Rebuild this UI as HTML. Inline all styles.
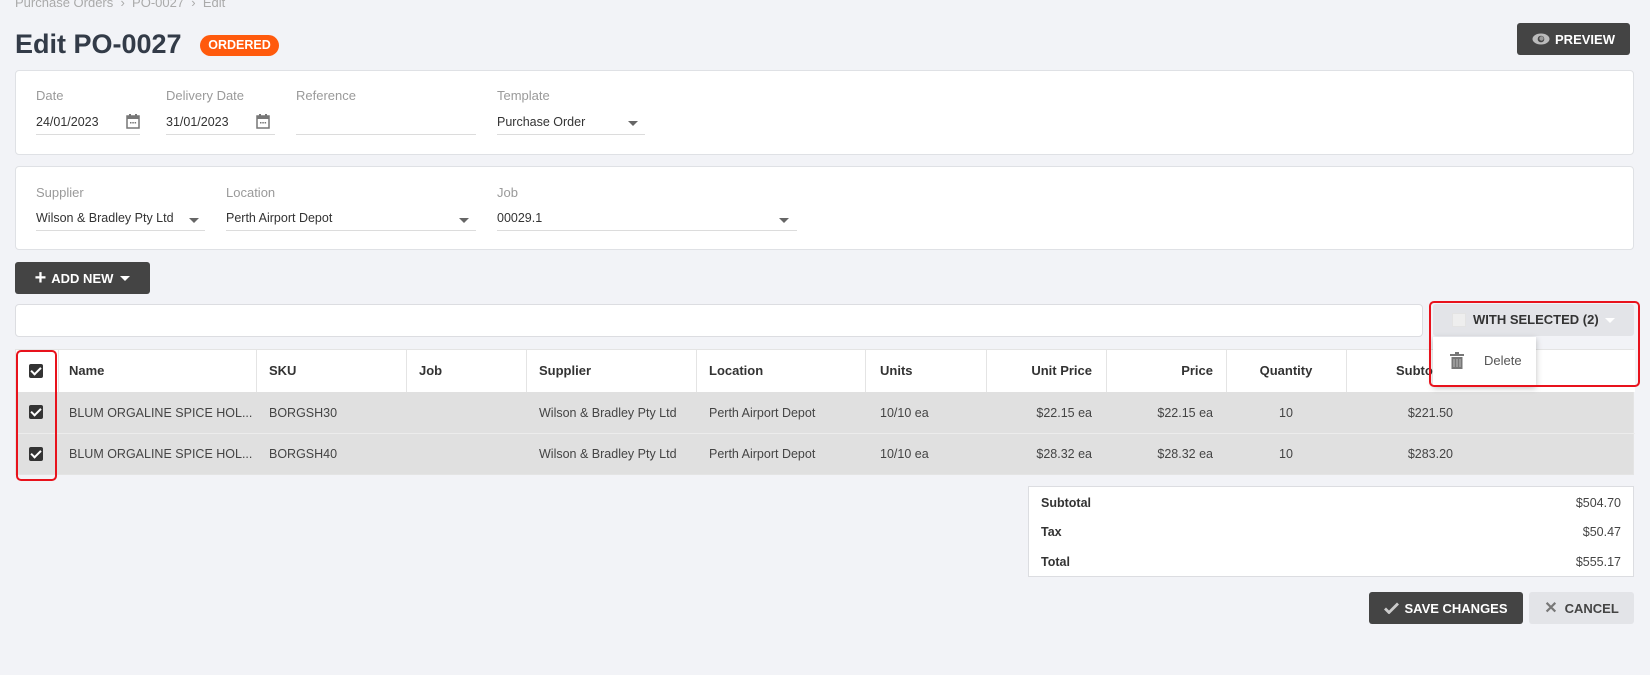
<!DOCTYPE html>
<html><head><meta charset="utf-8"><style>
*{box-sizing:border-box;margin:0;padding:0}
body{width:1650px;height:675px;background:#f2f3f7;font-family:"Liberation Sans",sans-serif;color:#333;position:relative;overflow:hidden;font-size:13px}
.a{position:absolute}
.panel{position:absolute;background:#fff;border:1px solid #dfe1e5;border-radius:4px}
.lbl{position:absolute;color:#9a9a9a;font-size:13px}
.val{position:absolute;color:#333;font-size:12.5px;border-bottom:1px solid #dcdcdc;height:20px}
.caret{position:absolute;width:0;height:0;border-left:5px solid transparent;border-right:5px solid transparent;border-top:5px solid #666}
.btn{position:absolute;background:#444;color:#fff;font-weight:bold;font-size:13px;border-radius:3px;display:flex;align-items:center;justify-content:center}
.th{position:absolute;top:0;height:42px;line-height:42px;font-weight:bold;font-size:13px;color:#333}
.td{position:absolute;font-size:12.5px;color:#444}
.vl{position:absolute;top:0;width:1px;height:42px;background:#e4e4e4}
.cb{position:absolute;width:14px;height:14px;background:#333;border-radius:2px}
.cb:after{content:"";position:absolute;left:4px;top:1px;width:4px;height:8px;border:solid #fff;border-width:0 2px 2px 0;transform:rotate(45deg)}
</style></head><body>
<div class="a" style="left:15px;top:-5px;color:#aaa;font-size:13px">Purchase Orders &nbsp;›&nbsp; PO-0027 &nbsp;›&nbsp; Edit</div>
<div class="a" style="left:15px;top:29px;font-size:27px;font-weight:bold;color:#333b48">Edit PO-0027</div>
<div class="a" style="left:200px;top:35px;width:79px;height:21px;border-radius:11px;background:#ff5a0d;color:#fff;font-weight:bold;font-size:12.5px;text-align:center;line-height:21px">ORDERED</div>
<div class="btn" style="left:1517px;top:23px;width:113px;height:32px"><svg width="18" height="12" viewBox="0 0 18 12" style="margin-right:5px"><ellipse cx="9" cy="6" rx="8.5" ry="5.5" fill="#bbb"/><circle cx="9" cy="6" r="3.3" fill="#444"/><circle cx="9.5" cy="5.5" r="2.2" fill="#999"/></svg>PREVIEW</div>

<div class="panel" style="left:15px;top:70px;width:1619px;height:85px"></div>
<div class="lbl" style="left:36px;top:88px">Date</div>
<div class="val" style="left:36px;top:115px;width:104px">24/01/2023</div>
<div class="lbl" style="left:166px;top:88px">Delivery Date</div>
<div class="val" style="left:166px;top:115px;width:109px">31/01/2023</div>
<svg class="a" style="left:126px;top:114px" width="14" height="15" viewBox="0 0 14 15"><rect x="1" y="2" width="12" height="12" fill="none" stroke="#777" stroke-width="1.5"/><rect x="1" y="2" width="12" height="3" fill="#777"/><rect x="3" y="0" width="2" height="3" fill="#777"/><rect x="9" y="0" width="2" height="3" fill="#777"/><rect x="4" y="8" width="1.5" height="1.5" fill="#777"/><rect x="6.3" y="8" width="1.5" height="1.5" fill="#777"/><rect x="8.6" y="8" width="1.5" height="1.5" fill="#777"/></svg>
<svg class="a" style="left:256px;top:114px" width="14" height="15" viewBox="0 0 14 15"><rect x="1" y="2" width="12" height="12" fill="none" stroke="#777" stroke-width="1.5"/><rect x="1" y="2" width="12" height="3" fill="#777"/><rect x="3" y="0" width="2" height="3" fill="#777"/><rect x="9" y="0" width="2" height="3" fill="#777"/><rect x="4" y="8" width="1.5" height="1.5" fill="#777"/><rect x="6.3" y="8" width="1.5" height="1.5" fill="#777"/><rect x="8.6" y="8" width="1.5" height="1.5" fill="#777"/></svg>
<div class="lbl" style="left:296px;top:88px">Reference</div>
<div class="val" style="left:296px;top:115px;width:180px"></div>
<div class="lbl" style="left:497px;top:88px">Template</div>
<div class="val" style="left:497px;top:115px;width:148px">Purchase Order</div>
<div class="caret" style="left:628px;top:121px"></div>

<div class="panel" style="left:15px;top:166px;width:1619px;height:84px"></div>
<div class="lbl" style="left:36px;top:185px">Supplier</div>
<div class="val" style="left:36px;top:211px;width:169px">Wilson &amp; Bradley Pty Ltd</div>
<div class="caret" style="left:189px;top:218px"></div>
<div class="lbl" style="left:226px;top:185px">Location</div>
<div class="val" style="left:226px;top:211px;width:250px">Perth Airport Depot</div>
<div class="caret" style="left:459px;top:218px"></div>
<div class="lbl" style="left:497px;top:185px">Job</div>
<div class="val" style="left:497px;top:211px;width:300px">00029.1</div>
<div class="caret" style="left:779px;top:218px"></div>

<div class="btn" style="left:15px;top:262px;width:135px;height:32px"><span style="font-size:20px;margin-right:5px;font-weight:bold">+</span>ADD NEW<span style="display:inline-block;margin-left:7px;border-left:5px solid transparent;border-right:5px solid transparent;border-top:5px solid #fff"></span></div>

<div class="a" style="left:15px;top:304px;width:1408px;height:33px;background:#fff;border:1px solid #dcdde1;border-radius:4px"></div>

<!-- table -->
<div class="a" style="left:15px;top:349px;width:1619px;height:126px;border:1px solid #e4e4e4;background:#e0e0e0">
<div class="a" style="left:0;top:0;width:1619px;height:42px;background:#fff"></div>
<div class="vl" style="left:42px"></div><div class="vl" style="left:240px"></div><div class="vl" style="left:390px"></div><div class="vl" style="left:510px"></div><div class="vl" style="left:680px"></div><div class="vl" style="left:849px"></div><div class="vl" style="left:970px"></div><div class="vl" style="left:1090px"></div><div class="vl" style="left:1210px"></div><div class="vl" style="left:1330px"></div>
<div class="th" style="left:53px">Name</div><div class="th" style="left:253px">SKU</div><div class="th" style="left:403px">Job</div><div class="th" style="left:523px">Supplier</div><div class="th" style="left:693px">Location</div><div class="th" style="left:864px">Units</div>
<div class="th" style="right:541px">Unit Price</div><div class="th" style="right:420px">Price</div><div class="th" style="left:1230px;width:80px;text-align:center">Quantity</div><div class="th" style="left:1380px">Subtotal</div>
<div class="a" style="left:0;top:83px;width:1619px;height:1px;background:#ececec"></div>
<div class="td" style="left:53px;top:56px">BLUM ORGALINE SPICE HOL...</div><div class="td" style="left:253px;top:56px">BORGSH30</div><div class="td" style="left:523px;top:56px">Wilson &amp; Bradley Pty Ltd</div><div class="td" style="left:693px;top:56px">Perth Airport Depot</div><div class="td" style="left:864px;top:56px">10/10 ea</div><div class="td" style="right:541px;top:56px">$22.15 ea</div><div class="td" style="right:420px;top:56px">$22.15 ea</div><div class="td" style="left:1230px;width:80px;text-align:center;top:56px">10</div><div class="td" style="right:180px;top:56px">$221.50</div>
<div class="td" style="left:53px;top:97px">BLUM ORGALINE SPICE HOL...</div><div class="td" style="left:253px;top:97px">BORGSH40</div><div class="td" style="left:523px;top:97px">Wilson &amp; Bradley Pty Ltd</div><div class="td" style="left:693px;top:97px">Perth Airport Depot</div><div class="td" style="left:864px;top:97px">10/10 ea</div><div class="td" style="right:541px;top:97px">$28.32 ea</div><div class="td" style="right:420px;top:97px">$28.32 ea</div><div class="td" style="left:1230px;width:80px;text-align:center;top:97px">10</div><div class="td" style="right:180px;top:97px">$283.20</div>
<div class="cb" style="left:13px;top:14px"></div><div class="cb" style="left:13px;top:55px"></div><div class="cb" style="left:13px;top:97px"></div>
</div>
<div class="a" style="left:16px;top:350px;width:41px;height:131px;border:2px solid #e8121c;border-radius:5px"></div>

<!-- with selected -->
<div class="a" style="left:1433px;top:304px;width:201px;height:32px;background:#e3e4e8;border-radius:3px;font-weight:bold;font-size:13px;color:#333;line-height:32px"><span style="position:absolute;left:19px;top:9px;width:14px;height:14px;background:#eee;border:1px solid #e3e3e3"></span><span style="position:absolute;left:40px">WITH SELECTED (2)</span><span style="position:absolute;left:172px;top:14px;border-left:5px solid transparent;border-right:5px solid transparent;border-top:5px solid #fff"></span></div>
<div class="a" style="left:1433px;top:337px;width:103px;height:49px;background:#fff;box-shadow:0 2px 6px rgba(0,0,0,.25)"><svg class="a" style="left:17px;top:15px" width="14" height="17" viewBox="0 0 14 17"><rect x="0" y="2" width="14" height="2" fill="#777"/><rect x="5" y="0" width="4" height="2" fill="#777"/><path d="M1.5 5h11v12h-11z" fill="#777"/><path d="M4 7v8M7 7v8M10 7v8" stroke="#bbb" stroke-width="1"/></svg><span class="a" style="left:51px;top:16px;color:#555;font-size:13px">Delete</span></div>
<div class="a" style="left:1429px;top:301px;width:211px;height:86px;border:2px solid #e8121c;border-radius:5px"></div>

<!-- totals -->
<div class="a" style="left:1028px;top:486px;width:606px;height:91px;background:#fff;border:1px solid #dcdde1;font-size:12.5px">
<div class="a" style="left:12px;top:9px;font-weight:bold">Subtotal</div><div class="a" style="right:12px;top:9px;color:#444">$504.70</div>
<div class="a" style="left:12px;top:38px;font-weight:bold">Tax</div><div class="a" style="right:12px;top:38px;color:#444">$50.47</div>
<div class="a" style="left:12px;top:68px;font-weight:bold">Total</div><div class="a" style="right:12px;top:68px;color:#444">$555.17</div>
</div>
<div class="btn" style="left:1369px;top:592px;width:154px;height:32px"><svg width="15" height="12" viewBox="0 0 15 12" style="margin-right:5px"><path d="M1 6.5l4 4L14 1.5" fill="none" stroke="#ccc" stroke-width="2.8"/></svg>SAVE CHANGES</div>
<div class="btn" style="left:1529px;top:592px;width:105px;height:32px;background:#e3e4e8;color:#444"><span style="font-size:16px;color:#777;margin-right:7px">✕</span>CANCEL</div>
</body></html>
